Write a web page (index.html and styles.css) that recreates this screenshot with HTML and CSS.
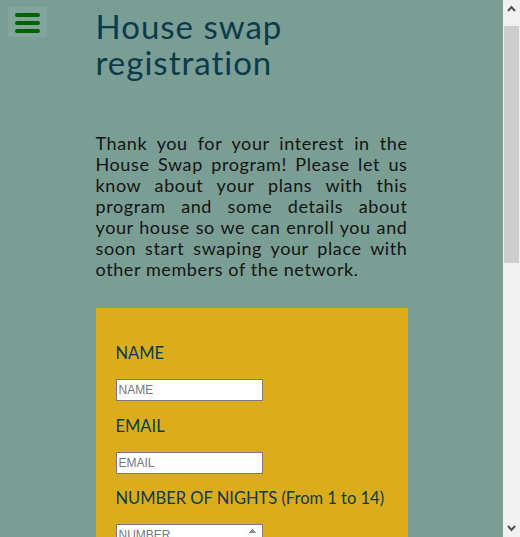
FILE: index.html
```html
<!DOCTYPE html>
<html lang="en">
<head>
<meta charset="utf-8">
<title>House swap registration</title>
<link rel="stylesheet" href="styles.css">
</head>
<body>
<button class="menu-btn" type="button" aria-label="Menu">
  <span class="bar"></span><span class="bar"></span><span class="bar"></span>
</button>
<main class="page">
  <h1 class="title">House swap registration</h1>
  <p class="intro">Thank you for your interest in the House Swap program! Please let us know about your plans with this program and some details about your house so we can enroll you and soon start swaping your place with other members of the network.</p>
  <form class="form-card">
    <label class="field-label" for="name">NAME</label>
    <input class="field" id="name" type="text" placeholder="NAME">
    <label class="field-label" for="email">EMAIL</label>
    <input class="field" id="email" type="email" placeholder="EMAIL">
    <label class="field-label" for="nights">NUMBER OF NIGHTS (From 1 to 14)</label>
    <input class="field" id="nights" type="number" min="1" max="14" placeholder="NUMBER">
    <label class="field-label" for="city">CITY</label>
    <input class="field" id="city" type="text" placeholder="CITY">
    <label class="field-label" for="rooms">NUMBER OF ROOMS</label>
    <input class="field" id="rooms" type="number" placeholder="NUMBER">
    <label class="field-label" for="details">DETAILS ABOUT YOUR HOUSE</label>
    <textarea class="field area" id="details" placeholder="DETAILS"></textarea>
    <button class="submit" type="submit">SUBMIT</button>
  </form>
</main>
<div class="scrollbar" aria-hidden="true">
  <svg class="arrow" width="17" height="17" viewBox="0 0 17 17"><polyline points="5,11 8.5,7 12,11" fill="none" stroke="#505050" stroke-width="2"/></svg>
  <div class="track"><div class="thumb"></div></div>
  <svg class="arrow" width="17" height="17" viewBox="0 0 17 17"><polyline points="5,6 8.5,10 12,6" fill="none" stroke="#505050" stroke-width="2"/></svg>
</div>
</body>
</html>
```
FILE: styles.css
```css
html, body {
  margin: 0;
  padding: 0;
}
body {
  background: #7a9e94;
  font-family: Lato, "Open Sans", sans-serif;
  color: #0c3a48;
  margin-right: 17px;
}
.menu-btn {
  position: absolute;
  top: 7px;
  left: 8px;
  width: 39px;
  height: 30px;
  padding: 6px 7px 4px;
  border: 0;
  background: rgba(255, 255, 255, 0.07);
  display: flex;
  flex-direction: column;
  gap: 4px;
  cursor: pointer;
}
.bar {
  display: block;
  width: 25px;
  height: 4px;
  border-radius: 2px;
  background: #006400;
}
.page {
  width: 312px;
  margin: 0 auto;
  padding: 8px 0 40px;
}
.title {
  margin: 0;
  font-size: 33px;
  line-height: 36px;
  letter-spacing: 1px;
  font-weight: 400;
  color: #0b3b4b;
}
.intro {
  margin: 53px 0 0;
  font-size: 18px;
  line-height: 21px;
  letter-spacing: 0.6px;
  text-align: justify;
  color: #141414;
}
.form-card {
  margin-top: 28px;
  background: #dbac1c;
  padding: 35px 20px 40px;
}
.field-label {
  display: block;
  font-size: 16.5px;
  line-height: 20px;
  color: #0b3b4b;
  margin-bottom: 16px;
}
.field {
  display: block;
  box-sizing: border-box;
  width: 147px;
  height: 22px;
  margin: 0 0 14.5px;
  padding: 1px 2px;
  border: 1px solid #7a7a7a;
  background: #fff;
  font-family: "Liberation Sans", Arial, sans-serif;
  font-size: 12px;
}
.field::placeholder {
  color: #777;
}
.field::-webkit-inner-spin-button {
  opacity: 1;
}
.area {
  height: 80px;
  width: 250px;
}
.submit {
  margin-top: 10px;
  padding: 8px 20px;
  border: 0;
  background: #0b3b4b;
  color: #fff;
  font-family: Lato, sans-serif;
  font-size: 16px;
}
.scrollbar {
  position: fixed;
  top: 0;
  right: 0;
  width: 17px;
  height: 100vh;
  background: #f1f1f1;
  display: flex;
  flex-direction: column;
}
.arrow {
  display: block;
  flex: none;
}
.track {
  flex: 1;
  padding: 9px 1px 0 1px;
}
.thumb {
  height: 237px;
  background: #cdcdcd;
}
```
